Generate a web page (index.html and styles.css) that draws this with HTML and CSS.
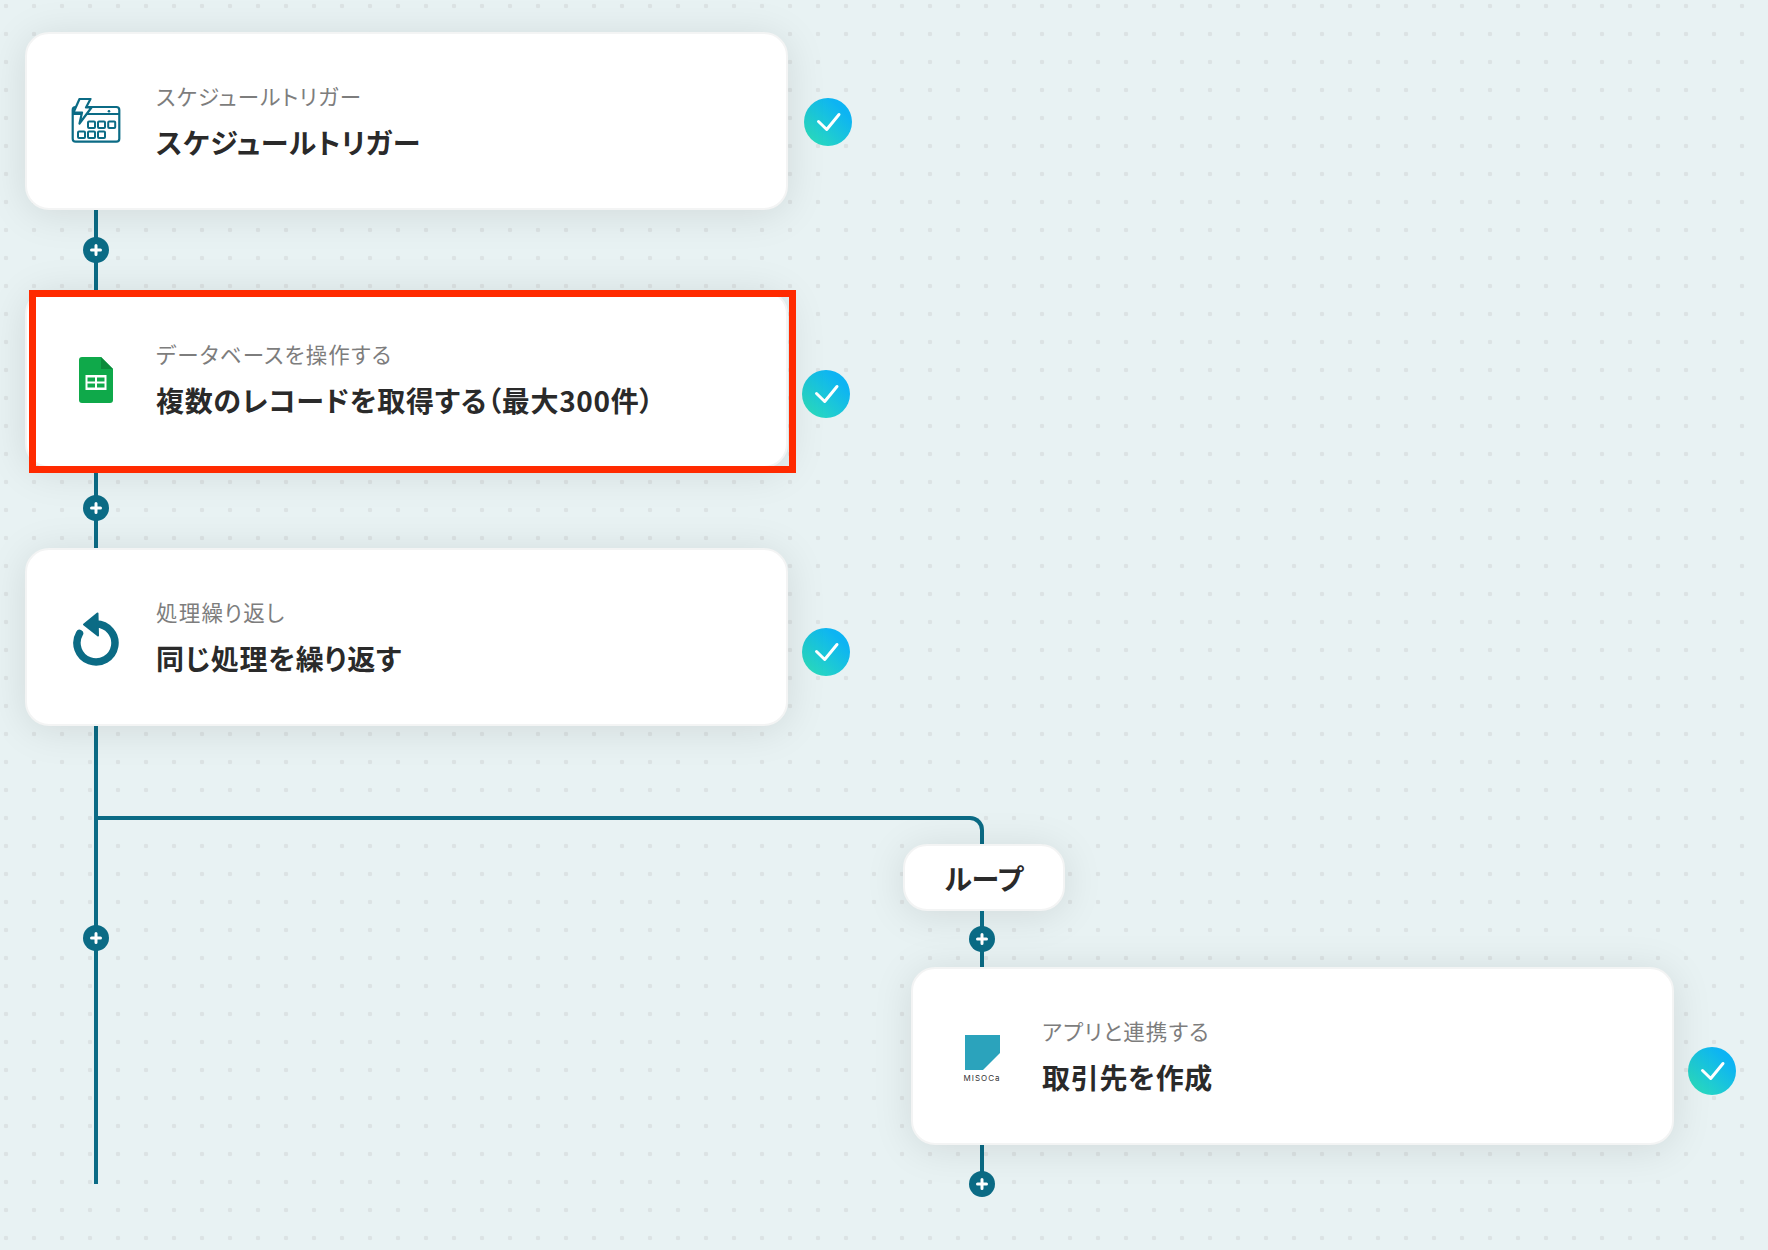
FILE: index.html
```html
<!DOCTYPE html>
<html lang="ja">
<head>
    <meta charset="UTF-8">
    <meta name="viewport" content="width=device-width, initial-scale=1.0">
    <title>フローボット</title>
    <link rel="stylesheet" href="styles.css">
</head>
<body>
    <div class="canvas">
        <div class="step">
            <div class="card">
                <div class="card-icon">
                    <svg class="icon-schedule" viewBox="0 0 50 46">
                        <rect x="1.7" y="9" width="46.6" height="34.7" rx="3" fill="none" stroke="#0b6b85" stroke-width="2.2"/>
                        <path d="M1.7 16H48.3" fill="none" stroke="#0b6b85" stroke-width="2.2"/>
                        <circle cx="38" cy="13.2" r="1.3" fill="#0b6b85"/>
                        <path d="M8.5 1H19.5L15 9.5H20.5L8.5 25.5L11 14.5H2.5Z" fill="#fff" stroke="#0b6b85" stroke-width="2.2" stroke-linejoin="round"/>
                        <g fill="none" stroke="#0b6b85" stroke-width="2">
                            <rect x="17" y="23.5" width="7" height="6.5" rx="1"/>
                            <rect x="27" y="23.5" width="7" height="6.5" rx="1"/>
                            <rect x="37.2" y="23.5" width="7" height="6.5" rx="1"/>
                            <rect x="7" y="33.5" width="7" height="6.5" rx="1"/>
                            <rect x="17" y="33.5" width="7" height="6.5" rx="1"/>
                            <rect x="27" y="33.5" width="7" height="6.5" rx="1"/>
                        </g>
                    </svg>
                </div>
                <div class="card-text">
                    <div class="card-label">スケジュールトリガー</div>
                    <div class="card-title">スケジュールトリガー</div>
                </div>
            </div>
            <div class="check check-first">
                <svg viewBox="0 0 48 48"><path d="M14.5 23.5L22.7 31.5L35 16.5" fill="none" stroke="#fff" stroke-width="3" stroke-linecap="round" stroke-linejoin="round"/></svg>
            </div>
        </div>

        <div class="connector">
            <div class="plus"><svg viewBox="0 0 26 26"><path d="M13 8.5V17.5M8.5 13H17.5" stroke="#fff" stroke-width="3" stroke-linecap="round"/></svg></div>
        </div>

        <div class="step">
            <div class="card">
                <div class="card-icon">
                    <svg class="icon-sheets" viewBox="0 0 34 46">
                        <path d="M3 0H22L34 12V43A3 3 0 0 1 31 46H3A3 3 0 0 1 0 43V3A3 3 0 0 1 3 0Z" fill="#0fa94a"/>
                        <path d="M22 0L34 12H22Z" fill="#0b8a3b"/>
                        <rect x="6.5" y="18" width="21" height="15" fill="#fff"/>
                        <g fill="#0fa94a">
                            <rect x="8.5" y="20.5" width="7.5" height="4"/>
                            <rect x="18" y="20.5" width="7.5" height="4"/>
                            <rect x="8.5" y="26.5" width="7.5" height="4"/>
                            <rect x="18" y="26.5" width="7.5" height="4"/>
                        </g>
                    </svg>
                </div>
                <div class="card-text">
                    <div class="card-label">データベースを操作する</div>
                    <div class="card-title">複数のレコードを取得する（最大300件）</div>
                </div>
                <div class="highlight"></div>
            </div>
            <div class="check">
                <svg viewBox="0 0 48 48"><path d="M14.5 23.5L22.7 31.5L35 16.5" fill="none" stroke="#fff" stroke-width="3" stroke-linecap="round" stroke-linejoin="round"/></svg>
            </div>
        </div>

        <div class="connector">
            <div class="plus"><svg viewBox="0 0 26 26"><path d="M13 8.5V17.5M8.5 13H17.5" stroke="#fff" stroke-width="3" stroke-linecap="round"/></svg></div>
        </div>

        <div class="step">
            <div class="card">
                <div class="card-icon">
                    <svg class="icon-loop" viewBox="0 0 48 56">
                        <path d="M7.5 22.5A19 19 0 1 0 24 13" fill="none" stroke="#0b6b85" stroke-width="7.5" stroke-linecap="round"/>
                        <path d="M12 13.5L25.5 2.5L26 24.5Z" fill="#0b6b85" stroke="#0b6b85" stroke-width="2" stroke-linejoin="round"/>
                    </svg>
                </div>
                <div class="card-text">
                    <div class="card-label">処理繰り返し</div>
                    <div class="card-title">同じ処理を繰り返す</div>
                </div>
            </div>
            <div class="check">
                <svg viewBox="0 0 48 48"><path d="M14.5 23.5L22.7 31.5L35 16.5" fill="none" stroke="#fff" stroke-width="3" stroke-linecap="round" stroke-linejoin="round"/></svg>
            </div>
        </div>

        <div class="split">
            <div class="track">
                <div class="plus"><svg viewBox="0 0 26 26"><path d="M13 8.5V17.5M8.5 13H17.5" stroke="#fff" stroke-width="3" stroke-linecap="round"/></svg></div>
            </div>
            <div class="branch">
                <div class="elbow"></div>
                <div class="pill">ループ</div>
                <div class="connector connector-branch">
                    <div class="plus"><svg viewBox="0 0 26 26"><path d="M13 8.5V17.5M8.5 13H17.5" stroke="#fff" stroke-width="3" stroke-linecap="round"/></svg></div>
                </div>
                <div class="step step-branch">
                    <div class="card">
                        <div class="card-icon">
                            <div class="misoca">
                                <svg viewBox="0 0 35 35"><path d="M0 0H35V18L18 35H0Z" fill="#2ba3bc"/></svg>
                                <span class="misoca-name">MISOCa</span>
                            </div>
                        </div>
                        <div class="card-text">
                            <div class="card-label">アプリと連携する</div>
                            <div class="card-title">取引先を作成</div>
                        </div>
                    </div>
                    <div class="check">
                        <svg viewBox="0 0 48 48"><path d="M14.5 23.5L22.7 31.5L35 16.5" fill="none" stroke="#fff" stroke-width="3" stroke-linecap="round" stroke-linejoin="round"/></svg>
                    </div>
                </div>
                <div class="connector connector-end">
                    <div class="plus"><svg viewBox="0 0 26 26"><path d="M13 8.5V17.5M8.5 13H17.5" stroke="#fff" stroke-width="3" stroke-linecap="round"/></svg></div>
                </div>
            </div>
        </div>
    </div>
</body>
</html>
```

FILE: styles.css
```css
html, body {
    margin: 0;
    height: 100%;
}
body {
    font-family: "Noto Sans CJK JP", "Noto Sans", sans-serif;
    background-color: #e8f2f3;
    background-image: radial-gradient(circle, #dce3e4 2px, transparent 2.6px);
    background-size: 28px 28px;
    background-position: -8px -8px;
    overflow: hidden;
}
.canvas {
    padding: 32px 0 0 25px;
}
.step {
    display: flex;
    align-items: center;
}
.card {
    position: relative;
    box-sizing: border-box;
    display: flex;
    align-items: center;
    width: 763px;
    height: 178px;
    background-color: #fff;
    border: 2px solid #f3f4f4;
    border-radius: 24px;
    box-shadow: 0 4px 40px rgba(0,0,0,0.1);
}
.card-icon {
    display: flex;
    align-items: center;
    justify-content: center;
    width: 50px;
    margin-left: 44px;
    margin-right: 35px;
}
.card-text {
    font-feature-settings: "palt";
}
.card-label {
    font-size: 21.5px;
    line-height: 30px;
    letter-spacing: 1.2px;
    color: #7d7d7d;
}
.card-title {
    margin-top: 12px;
    font-size: 28px;
    line-height: 38px;
    font-weight: 700;
    letter-spacing: 0.7px;
    color: #2a2a2a;
}
.icon-schedule {
    width: 50px;
    height: 46px;
}
.icon-sheets {
    width: 34px;
    height: 46px;
    margin-top: 2px;
}
.icon-loop {
    width: 48px;
    height: 56px;
    margin-top: 3px;
}
.misoca {
    display: flex;
    flex-direction: column;
    align-items: center;
    margin-top: 5px;
}
.misoca svg {
    width: 35px;
    height: 35px;
}
.misoca-name {
    margin-top: 3px;
    font-family: "Inter", sans-serif;
    font-size: 8px;
    line-height: 10px;
    letter-spacing: 1px;
    color: #333;
}
.highlight {
    position: absolute;
    top: -2px;
    left: 2px;
    right: -10px;
    bottom: -7px;
    border: 7px solid #ff2a00;
}
.check {
    flex-shrink: 0;
    width: 48px;
    height: 48px;
    margin-left: 14px;
    margin-top: 30px;
    border-radius: 50%;
    background: linear-gradient(45deg, #2bdcbb 8%, #0db4f3 78%);
}
.check svg {
    display: block;
    width: 48px;
    height: 48px;
}
.check-first {
    margin-left: 16px;
    margin-top: 2px;
}
.connector {
    display: flex;
    align-items: center;
    justify-content: center;
    width: 4px;
    height: 80px;
    margin-left: 69px;
    background-color: #0b6b85;
}
.plus {
    flex-shrink: 0;
    width: 26px;
    height: 26px;
    border-radius: 50%;
    background-color: #0b6b85;
}
.plus svg {
    display: block;
    width: 26px;
    height: 26px;
}
.split {
    display: flex;
    align-items: flex-start;
}
.track {
    box-sizing: border-box;
    display: flex;
    justify-content: center;
    width: 4px;
    height: 458px;
    margin-left: 69px;
    padding-top: 199px;
    background-color: #0b6b85;
}
.branch {
    display: flex;
    flex-direction: column;
    align-items: flex-start;
    padding-top: 90px;
}
.elbow {
    box-sizing: border-box;
    width: 886px;
    height: 28px;
    border-top: 4px solid #0b6b85;
    border-right: 4px solid #0b6b85;
    border-top-right-radius: 14px;
}
.pill {
    box-sizing: border-box;
    display: flex;
    align-items: center;
    justify-content: center;
    width: 162px;
    height: 67px;
    margin-left: 805px;
    background-color: #fff;
    border: 2px solid #f3f4f4;
    border-radius: 24px;
    box-shadow: 0 4px 40px rgba(0,0,0,0.1);
    font-size: 28px;
    font-weight: 700;
    font-feature-settings: "palt";
    color: #2a2a2a;
}
.connector-branch {
    height: 56px;
    margin-left: 882px;
}
.connector-end {
    height: 39px;
    margin-left: 882px;
    align-items: flex-end;
}
.connector-end .plus {
    margin-bottom: -13px;
}
.step-branch {
    margin-left: 813px;
}
```
